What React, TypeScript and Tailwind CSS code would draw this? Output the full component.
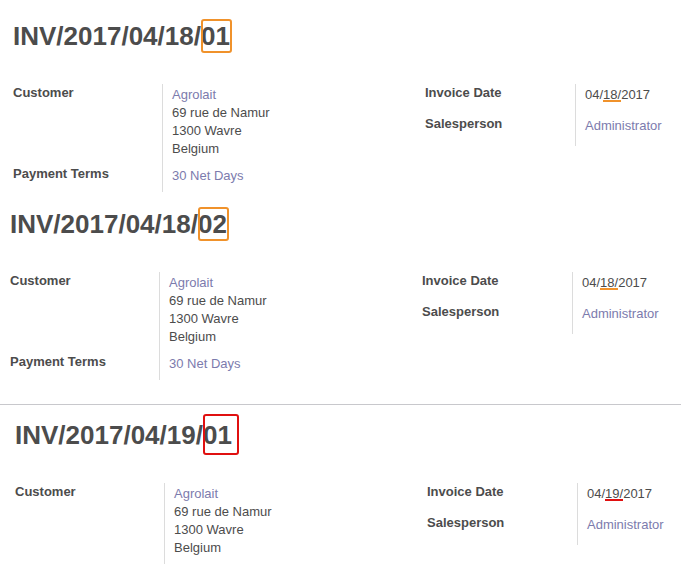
import React from "react";

type Mark = "orange" | "red";

const markBox: Record<Mark, string> = {
  orange: "border-[#f0922b] -top-[2px] -bottom-[2px] left-0 -right-[2px]",
  red: "border-[#e01010] -top-[6px] -bottom-[5px] left-0 -right-[7px]",
};

const markLine: Record<Mark, string> = {
  orange: "bg-[#f0922b]",
  red: "bg-[#e01010]",
};

type Invoice = {
  prefix: string;
  seq: string;
  day: string;
  mark: Mark;
  terms: boolean;
  pad: string;
};

const invoices: Invoice[] = [
  { prefix: "INV/2017/04/18/", seq: "01", day: "18", mark: "orange", terms: true, pad: "pl-[13px] pt-4" },
  { prefix: "INV/2017/04/18/", seq: "02", day: "18", mark: "orange", terms: true, pad: "pl-[10px] pt-3" },
  { prefix: "INV/2017/04/19/", seq: "01", day: "19", mark: "red", terms: false, pad: "pl-[15px] pt-[10px]" },
];

function Label({ children }: { children: React.ReactNode }) {
  return <div className="pt-px text-[13px] font-bold leading-4 text-[#4c4c4c]">{children}</div>;
}

function Value({ children, pb = "pb-[7px]" }: { children: React.ReactNode; pb?: string }) {
  return <div className={`border-l border-[#dcdcdc] ${pb} pl-[9px] pt-[2px] text-[13px] leading-[18px] text-[#4c4c4c]`}>{children}</div>;
}

function Link({ children }: { children: React.ReactNode }) {
  return <span className="text-[#7c7bad]">{children}</span>;
}

function InvoiceBlock({ inv }: { inv: Invoice }) {
  return (
    <section className={inv.pad}>
      <h1 className="h-10 text-[26px] font-bold leading-10 whitespace-nowrap text-[#4c4c4c]">
        {inv.prefix}
        <span className="relative">
          {inv.seq}
          <span className={`pointer-events-none absolute rounded-[3px] border-2 ${markBox[inv.mark]}`} />
        </span>
      </h1>
      <div className="mt-7 flex">
        <div className="grid w-[412px] shrink-0 grid-cols-[149px_1fr]">
          <Label>Customer</Label>
          <Value>
            <Link>Agrolait</Link>
            <div>69 rue de Namur</div>
            <div>1300 Wavre</div>
            <div>Belgium</div>
          </Value>
          {inv.terms && (
            <>
              <Label>Payment Terms</Label>
              <Value>
                <Link>30 Net Days</Link>
              </Value>
            </>
          )}
        </div>
        <div className="grid grid-cols-[150px_auto] self-start">
          <Label>Invoice Date</Label>
          <Value pb="pb-[11px]">
            04/
            <span className="relative">
              {inv.day}
              <span className={`absolute bottom-0 -right-[3px] left-0 h-[2px] ${markLine[inv.mark]}`} />
            </span>
            /2017
          </Value>
          <Label>Salesperson</Label>
          <Value pb="pb-[11px]">
            <Link>Administrator</Link>
          </Value>
        </div>
      </div>
    </section>
  );
}

export default function App() {
  return (
    <div className="h-[577px] w-[681px] overflow-hidden bg-white font-['Liberation_Sans',Arial,sans-serif]">
      <InvoiceBlock inv={invoices[0]} />
      <InvoiceBlock inv={invoices[1]} />
      <div className="mt-[24px] border-t border-[#c8c8cc]" />
      <InvoiceBlock inv={invoices[2]} />
    </div>
  );
}
